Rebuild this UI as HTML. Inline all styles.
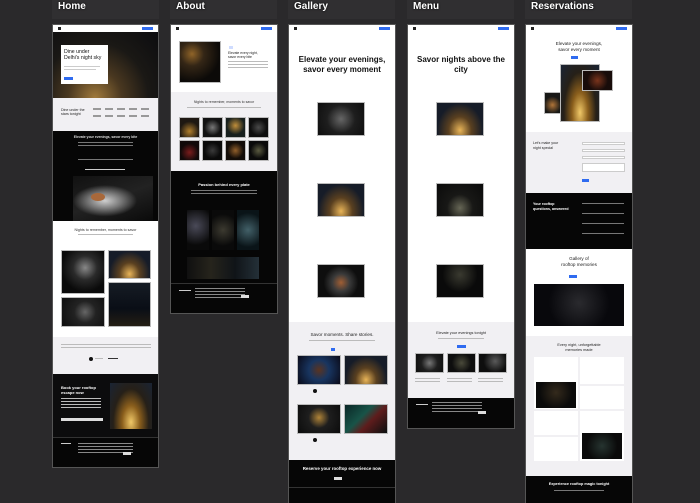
<!DOCTYPE html>
<html><head><meta charset="utf-8"><style>
*{margin:0;padding:0;box-sizing:border-box}
body{width:700px;height:503px;background:#2a292b;position:relative;overflow:hidden;font-family:"Liberation Sans",sans-serif}
.a{position:absolute}
.lab{position:absolute;top:0;height:19px;background:#302f31;color:#fff;font-weight:bold;font-size:10px;padding:1px 0 0 6px;text-shadow:0 0 2px #000}
.w{background:#fff}.g{background:#f1f0f3}.k{background:#060606}
.nav{height:7px;background:#fff}
.nav i{position:absolute;right:5px;top:2px;width:11px;height:3px;background:#2f6bf0}
.nav b{position:absolute;left:5px;top:2px;width:3px;height:3px;background:#222}
.t{position:absolute;text-align:center;color:#111;white-space:nowrap}
.img{position:absolute;border:1px solid #bbb}
.line{position:absolute;height:1px;background:#bbb}
.wl{position:absolute;height:1px;background:#777}
</style></head><body>

<div class="lab" style="left:52px;width:107px">Home</div>
<div class="lab" style="left:170px;width:107px">About</div>
<div class="lab" style="left:288px;width:107px">Gallery</div>
<div class="lab" style="left:407px;width:107px">Menu</div>
<div class="lab" style="left:525px;width:107px">Reservations</div>

<!-- HOME -->
<div class="a" style="left:52px;top:24px;width:107px;height:444px;background:#0a0a0a;border:1px solid #555">
  <div class="a nav" style="left:0;top:0;width:105px"><b></b><i></i></div>
  <div class="a" style="left:0;top:7px;width:105px;height:66px;background:radial-gradient(ellipse at 40% 100%,#a07a3c 0%,#4a3820 30%,#1a1815 60%,#0c0c0f 100%)"></div>
  <div class="a w" style="left:8px;top:20px;width:47px;height:39px;padding:3px">
    <div style="font-size:5.2px;line-height:5.8px;color:#111;margin-top:2px">Dine under<br>Delhi's night sky</div>
    <div style="height:1px;background:#ccc;margin-top:4px;width:36px"></div>
    <div style="height:1px;background:#ccc;margin-top:2px;width:32px"></div>
    <div style="width:9px;height:3px;background:#2f6bf0;margin-top:7px"></div>
  </div>
  <div class="a g" style="left:0;top:73px;width:105px;height:33px">
    <div style="position:absolute;left:8px;top:10px;font-size:3.6px;line-height:4.2px;color:#222">Dine under the<br>stars tonight</div>
    <div style="position:absolute;left:40px;top:10px;width:58px;height:2px;background:repeating-linear-gradient(90deg,#999 0 8px,transparent 8px 12px)"></div>
    <div style="position:absolute;left:40px;top:17px;width:58px;height:2px;background:repeating-linear-gradient(90deg,#999 0 8px,transparent 8px 12px)"></div>
  </div>
  <div class="a k" style="left:0;top:106px;width:105px;height:90px">
    <div class="t" style="left:0;width:105px;font-size:3.4px;color:#ddd;top:4px;font-weight:bold">Elevate your evenings, savor every bite</div>
    <div class="wl" style="left:25px;top:11px;width:55px"></div>
    <div class="wl" style="left:25px;top:14px;width:55px"></div>
    <div class="wl" style="left:25px;top:28px;width:55px"></div>
    <div class="wl" style="left:32px;top:38px;width:40px;background:#ccc"></div>
    <div class="a" style="left:20px;top:45px;width:80px;height:45px;background:radial-gradient(ellipse 40% 35% at 40% 55%,#cfcfcf 0%,#7a7a7a 50%,transparent 100%),linear-gradient(160deg,#111,#222 50%,#0a0a0a)"></div>
    <div class="a" style="left:38px;top:62px;width:14px;height:8px;border-radius:50%;background:#a8683a"></div>
  </div>
  <div class="a w" style="left:0;top:196px;width:105px;height:116px">
    <div class="t" style="left:0;width:105px;top:7px;font-size:3.6px;color:#333">Nights to remember, moments to savor</div>
    <div class="line" style="left:25px;top:13px;width:55px"></div>
    <div class="img" style="left:8px;top:29px;width:44px;height:44px;background:radial-gradient(circle at 55% 40%,#888,#2a2a2a 35%,#0a0a0a 70%)"></div>
    <div class="img" style="left:8px;top:76px;width:44px;height:30px;background:radial-gradient(circle at 55% 50%,#666,#222 40%,#0e0e0e)"></div>
    <div class="img" style="left:55px;top:29px;width:43px;height:29px;background:radial-gradient(ellipse at 50% 85%,#e8b458,#5a4020 35%,#161c28 70%)"></div>
    <div class="img" style="left:55px;top:61px;width:43px;height:45px;background:linear-gradient(#161c24,#0a0e16 60%,#241e14)"></div>
  </div>
  <div class="a g" style="left:0;top:312px;width:105px;height:37px">
    <div class="line" style="left:8px;top:7px;width:90px"></div>
    <div class="line" style="left:8px;top:10px;width:90px"></div>
    <div class="a" style="left:36px;top:20px;width:4px;height:4px;border-radius:50%;background:#111"></div>
    <div class="line" style="left:42px;top:21px;width:8px"></div>
    <div class="line" style="left:55px;top:21px;width:10px;background:#333"></div>
  </div>
  <div class="a k" style="left:0;top:349px;width:105px;height:63px;background:#0c0c0d">
    <div style="position:absolute;left:8px;top:12px;font-size:4px;line-height:4.6px;color:#fff;font-weight:bold">Book your rooftop<br>escape now</div>
    <div class="wl" style="left:8px;top:24px;width:40px;background:#bbb"></div>
    <div class="wl" style="left:8px;top:27px;width:40px;background:#bbb"></div>
    <div class="wl" style="left:8px;top:30px;width:40px;background:#bbb"></div>
    <div class="wl" style="left:8px;top:33px;width:40px;background:#bbb"></div>
    <div class="a" style="left:8px;top:44px;width:42px;height:3px;background:#ddd"></div>
    <div class="a" style="left:57px;top:9px;width:42px;height:46px;background:radial-gradient(ellipse at 50% 85%,#f0c868,#8a5e1c 30%,#262018 60%,#1a2434)"></div>
  </div>
  <div class="a k" style="left:0;top:412px;width:105px;height:30px;border-top:1px solid #333">
    <div class="wl" style="left:8px;top:5px;width:10px;background:#ccc"></div>
    <div class="wl" style="left:25px;top:5px;width:55px;height:10px;background:repeating-linear-gradient(#888 0 1px,transparent 1px 3px)"></div>
    <div class="a" style="left:70px;top:14px;width:8px;height:3px;background:#ddd"></div>
  </div>
</div>

<!-- ABOUT -->
<div class="a" style="left:170px;top:24px;width:108px;height:290px;background:#060606;border:1px solid #555">
  <div class="a nav" style="left:0;top:0;width:106px"><b></b><i></i></div>
  <div class="a w" style="left:0;top:7px;width:106px;height:60px">
    <div class="img" style="left:8px;top:9px;width:42px;height:42px;background:radial-gradient(circle at 30% 30%,#906428,#342616 30%,#0c0a08 70%)"></div>
    <div class="a" style="left:58px;top:14px;width:4px;height:3px;background:#cfdcff"></div>
    <div style="position:absolute;left:57px;top:19px;font-size:3.4px;line-height:4px;color:#222">Elevate every night,<br>savor every bite</div>
    <div class="line" style="left:57px;top:29px;width:40px"></div>
    <div class="line" style="left:57px;top:32px;width:40px"></div>
    <div class="line" style="left:57px;top:35px;width:40px"></div>
  </div>
  <div class="a g" style="left:0;top:67px;width:106px;height:79px">
    <div class="t" style="left:0;width:106px;top:8px;font-size:3.5px;color:#333">Nights to remember, moments to savor</div>
    <div class="line" style="left:16px;top:15px;width:74px"></div>
  </div>
  <div class="img" style="left:8px;top:92px;width:21px;height:21px;background:radial-gradient(circle at 50% 70%,#b07e2c,#1e1812 60%)"></div>
  <div class="img" style="left:31px;top:92px;width:21px;height:21px;background:radial-gradient(circle at 50% 50%,#777,#121212 60%)"></div>
  <div class="img" style="left:54px;top:92px;width:21px;height:21px;background:radial-gradient(circle at 50% 40%,#c08e3a,#18201e 60%)"></div>
  <div class="img" style="left:77px;top:92px;width:21px;height:21px;background:radial-gradient(circle at 50% 50%,#4a4a4a,#0e0e0e 60%)"></div>
  <div class="img" style="left:8px;top:115px;width:21px;height:21px;background:radial-gradient(circle at 50% 60%,#7a1c1c,#100909 60%)"></div>
  <div class="img" style="left:31px;top:115px;width:21px;height:21px;background:radial-gradient(circle at 50% 50%,#3a3a3a,#0a0a0a 60%)"></div>
  <div class="img" style="left:54px;top:115px;width:21px;height:21px;background:radial-gradient(circle at 50% 50%,#905e2a,#120c08 60%)"></div>
  <div class="img" style="left:77px;top:115px;width:21px;height:21px;background:radial-gradient(circle at 50% 50%,#5a5a40,#0a0a0a 60%)"></div>
  <div class="t" style="left:0;width:106px;top:157px;font-size:4px;color:#fff;font-weight:bold">Passion behind every plate</div>
  <div class="wl" style="left:20px;top:165px;width:66px"></div>
  <div class="wl" style="left:20px;top:168px;width:66px"></div>
  <div class="a" style="left:16px;top:185px;width:22px;height:40px;background:radial-gradient(circle at 40% 40%,#4a4a58,#0a0a0a 70%)"></div>
  <div class="a" style="left:41px;top:185px;width:22px;height:40px;background:radial-gradient(circle at 50% 50%,#3c3a30,#0a0a0a 70%)"></div>
  <div class="a" style="left:66px;top:185px;width:22px;height:40px;background:radial-gradient(circle at 50% 50%,#426068,#0a1418 75%)"></div>
  <div class="a" style="left:16px;top:232px;width:72px;height:22px;background:linear-gradient(90deg,#101010,#26241c,#101418,#243038)"></div>
  <div class="a" style="left:0;top:258px;width:106px;height:1px;background:#333"></div>
  <div class="wl" style="left:8px;top:265px;width:12px;background:#ccc"></div>
  <div class="a" style="left:24px;top:263px;width:50px;height:10px;background:repeating-linear-gradient(#888 0 1px,transparent 1px 3px)"></div>
  <div class="a" style="left:70px;top:270px;width:8px;height:3px;background:#ddd"></div>
</div>

<!-- GALLERY -->
<div class="a" style="left:288px;top:24px;width:108px;height:479px;background:#060606;border:1px solid #555;border-bottom:none">
  <div class="a nav" style="left:0;top:0;width:106px"><b></b><i></i></div>
  <div class="a w" style="left:0;top:7px;width:106px;height:290px">
    <div class="t" style="left:0;width:106px;top:23px;font-size:8px;font-weight:bold;line-height:9.5px;color:#111">Elevate your evenings,<br>savor every moment</div>
    <div class="img" style="left:28px;top:70px;width:48px;height:34px;background:radial-gradient(circle at 50% 50%,#666,#1e1e1e 50%,#0e0e0e)"></div>
    <div class="img" style="left:28px;top:151px;width:48px;height:34px;background:radial-gradient(ellipse at 50% 85%,#e8b458,#5a4020 35%,#161c28 70%)"></div>
    <div class="img" style="left:28px;top:232px;width:48px;height:34px;background:radial-gradient(circle at 50% 55%,#a05e34,#3a3a3a 30%,#0e0e0e 60%)"></div>
  </div>
  <div class="a g" style="left:0;top:297px;width:106px;height:138px">
    <div class="t" style="left:0;width:106px;top:10px;font-size:4.6px;color:#222">Savor moments. Share stories.</div>
    <div class="line" style="left:20px;top:18px;width:66px"></div>
    <div class="a" style="left:42px;top:26px;width:4px;height:3px;background:#2f6bf0"></div>
    <div class="img" style="left:8px;top:33px;width:44px;height:30px;background:radial-gradient(circle at 50% 50%,#5a3420,#183560 40%,#0a0a18)"></div>
    <div class="img" style="left:55px;top:33px;width:44px;height:30px;background:radial-gradient(ellipse at 50% 85%,#e8b458,#5a4020 35%,#161c28 70%)"></div>
    <div class="img" style="left:8px;top:82px;width:44px;height:30px;background:radial-gradient(circle at 50% 45%,#b08438,#1e1e1e 40%,#0c0c0c)"></div>
    <div class="img" style="left:55px;top:82px;width:44px;height:30px;background:linear-gradient(135deg,#0a2626,#185448 40%,#5e1c1c 60%,#0a1010)"></div>
    <div class="a" style="left:24px;top:67px;width:4px;height:4px;border-radius:50%;background:#111"></div>
    <div class="a" style="left:24px;top:116px;width:4px;height:4px;border-radius:50%;background:#111"></div>
  </div>
  <div class="t" style="left:0;width:106px;top:441px;font-size:4.4px;color:#fff;font-weight:bold">Reserve your rooftop experience now</div>
  <div class="a" style="left:45px;top:452px;width:8px;height:3px;background:#ddd"></div>
  <div class="a" style="left:0;top:462px;width:106px;height:1px;background:#333"></div>
</div>

<!-- MENU -->
<div class="a" style="left:407px;top:24px;width:108px;height:405px;background:#060606;border:1px solid #555">
  <div class="a nav" style="left:0;top:0;width:106px"><b></b><i></i></div>
  <div class="a w" style="left:0;top:7px;width:106px;height:290px">
    <div class="t" style="left:0;width:106px;top:23px;font-size:8px;font-weight:bold;line-height:9.5px;color:#111">Savor nights above the<br>city</div>
    <div class="img" style="left:28px;top:70px;width:48px;height:34px;background:radial-gradient(ellipse at 50% 85%,#e8b458,#5a4020 35%,#161c28 70%)"></div>
    <div class="img" style="left:28px;top:151px;width:48px;height:34px;background:radial-gradient(ellipse at 50% 75%,#665,#181816 40%,#0a0a0a)"></div>
    <div class="img" style="left:28px;top:232px;width:48px;height:34px;background:radial-gradient(circle at 50% 30%,#3a3a30,#0a0a0a 55%)"></div>
  </div>
  <div class="a g" style="left:0;top:297px;width:106px;height:76px">
    <div class="t" style="left:0;width:106px;top:9px;font-size:3.8px;color:#222">Elevate your evenings tonight</div>
    <div class="line" style="left:30px;top:16px;width:46px"></div>
    <div class="a" style="left:49px;top:23px;width:9px;height:3px;background:#2f6bf0"></div>
    <div class="img" style="left:7px;top:31px;width:29px;height:20px;background:radial-gradient(circle at 50% 50%,#777,#1e1e1e 50%,#0e0e0e)"></div>
    <div class="img" style="left:39px;top:31px;width:29px;height:20px;background:radial-gradient(circle at 50% 50%,#4a4a3a,#0e0e0e 60%)"></div>
    <div class="img" style="left:70px;top:31px;width:29px;height:20px;background:radial-gradient(circle at 60% 40%,#5a5a5a,#0e0e0e 60%)"></div>
    <div class="line" style="left:7px;top:56px;width:25px"></div><div class="line" style="left:39px;top:56px;width:25px"></div><div class="line" style="left:70px;top:56px;width:25px"></div>
    <div class="line" style="left:7px;top:59px;width:25px"></div><div class="line" style="left:39px;top:59px;width:25px"></div><div class="line" style="left:70px;top:59px;width:25px"></div>
  </div>
  <div class="wl" style="left:8px;top:379px;width:12px;background:#ccc"></div>
  <div class="a" style="left:24px;top:377px;width:50px;height:10px;background:repeating-linear-gradient(#888 0 1px,transparent 1px 3px)"></div>
  <div class="a" style="left:70px;top:386px;width:8px;height:3px;background:#ddd"></div>
</div>

<!-- RESERVATIONS -->
<div class="a" style="left:525px;top:24px;width:108px;height:479px;background:#060606;border:1px solid #555;border-bottom:none">
  <div class="a nav" style="left:0;top:0;width:106px"><b></b><i></i></div>
  <div class="a w" style="left:0;top:7px;width:106px;height:100px">
    <div class="t" style="left:0;width:106px;top:9px;font-size:4.6px;line-height:5.8px;color:#222">Elevate your evenings,<br>savor every moment</div>
    <div class="a" style="left:45px;top:24px;width:7px;height:3px;background:#2f6bf0"></div>
    <div class="img" style="left:18px;top:60px;width:17px;height:22px;background:radial-gradient(circle at 50% 60%,#b07438,#181816 60%)"></div>
    <div class="img" style="left:34px;top:32px;width:40px;height:58px;background:radial-gradient(ellipse at 50% 85%,#f0c868,#8a5e1c 30%,#262018 60%,#1a2434)"></div>
    <div class="img" style="left:56px;top:38px;width:31px;height:21px;background:radial-gradient(circle at 50% 50%,#7a341c,#180c0a 60%)"></div>
  </div>
  <div class="a g" style="left:0;top:107px;width:106px;height:61px">
    <div style="position:absolute;left:7px;top:9px;font-size:3.6px;line-height:4.5px;color:#222">Let's make your<br>night special</div>
    <div class="a" style="left:56px;top:10px;width:43px;height:3px;border:1px solid #ccc;background:#fff"></div>
    <div class="a" style="left:56px;top:17px;width:43px;height:3px;border:1px solid #ccc;background:#fff"></div>
    <div class="a" style="left:56px;top:24px;width:43px;height:3px;border:1px solid #ccc;background:#fff"></div>
    <div class="a" style="left:56px;top:31px;width:43px;height:9px;border:1px solid #ccc;background:#fff"></div>
    <div class="a" style="left:56px;top:47px;width:7px;height:3px;background:#2f6bf0"></div>
  </div>
  <div class="a k" style="left:0;top:168px;width:106px;height:56px">
    <div style="position:absolute;left:7px;top:9px;font-size:3.6px;line-height:4.5px;color:#fff;font-weight:bold">Your rooftop<br>questions, answered</div>
    <div class="wl" style="left:56px;top:10px;width:42px"></div>
    <div class="wl" style="left:56px;top:20px;width:42px"></div>
    <div class="wl" style="left:56px;top:30px;width:42px"></div>
    <div class="wl" style="left:56px;top:40px;width:42px"></div>
  </div>
  <div class="a w" style="left:0;top:224px;width:106px;height:87px">
    <div class="t" style="left:0;width:106px;top:7px;font-size:4.6px;line-height:6px;color:#222">Gallery of<br>rooftop memories</div>
    <div class="a" style="left:43px;top:26px;width:8px;height:3px;background:#2f6bf0"></div>
    <div class="a" style="left:8px;top:35px;width:90px;height:42px;background:radial-gradient(circle at 50% 45%,#2a2a2e,#08080c 60%)"></div>
  </div>
  <div class="a g" style="left:0;top:311px;width:106px;height:140px">
    <div class="t" style="left:0;width:106px;top:7px;font-size:3.8px;line-height:4.8px;color:#222">Every night, unforgettable<br>memories made</div>
    <div class="a w" style="left:8px;top:21px;width:44px;height:52px"></div>
    <div class="a" style="left:10px;top:46px;width:40px;height:26px;background:radial-gradient(circle at 50% 40%,#342a1c,#0a0a0a 65%)"></div>
    <div class="a w" style="left:54px;top:21px;width:44px;height:27px"></div>
    <div class="a w" style="left:54px;top:50px;width:44px;height:23px"></div>
    <div class="a w" style="left:8px;top:75px;width:44px;height:24px"></div>
    <div class="a w" style="left:8px;top:101px;width:44px;height:24px"></div>
    <div class="a w" style="left:54px;top:75px;width:44px;height:50px"></div>
    <div class="a" style="left:56px;top:97px;width:40px;height:26px;background:radial-gradient(circle at 50% 50%,#263430,#0a0a0a 65%)"></div>
  </div>
  <div class="t" style="left:0;width:106px;top:457px;font-size:3.8px;color:#fff;font-weight:bold">Experience rooftop magic tonight</div>
  <div class="wl" style="left:28px;top:465px;width:50px"></div>
</div>

</body></html>
